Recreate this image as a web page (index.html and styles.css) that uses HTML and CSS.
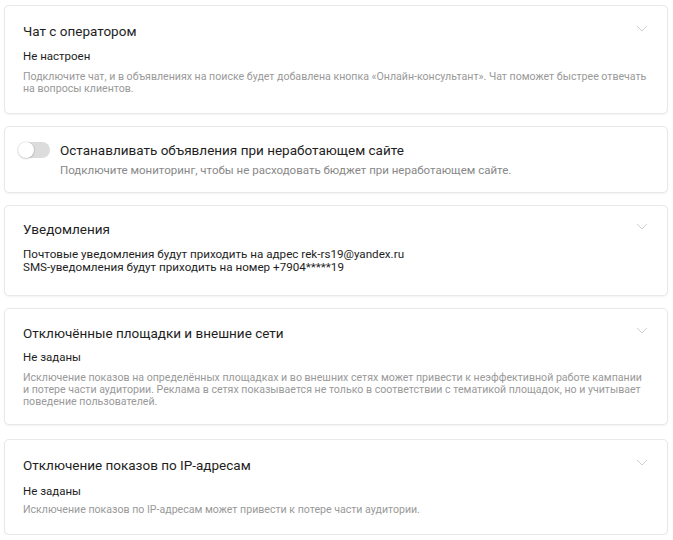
FILE: index.html
```html
<!DOCTYPE html>
<html lang="ru">
<head>
<meta charset="utf-8">
<title>Настройки</title>
<link rel="stylesheet" href="styles.css">
</head>
<body>
<div class="list">
  <section class="card card-chat">
    <div class="head">
      <h2 class="title">Чат с оператором</h2>
      <svg class="chev" width="12" height="7" viewBox="0 0 12 7"><path d="M1 1l5 5 5-5" fill="none" stroke="#cfcfcf" stroke-width="1"/></svg>
    </div>
    <div class="status">Не настроен</div>
    <p class="desc">Подключите чат, и в объявлениях на поиске будет добавлена кнопка «Онлайн-консультант». Чат поможет быстрее отвечать на вопросы клиентов.</p>
  </section>

  <section class="card card-monitor">
    <span class="toggle"><span class="knob"></span></span>
    <div class="monitor-text">
      <h2 class="title">Останавливать объявления при неработающем сайте</h2>
      <p class="sub">Подключите мониторинг, чтобы не расходовать бюджет при неработающем сайте.</p>
    </div>
  </section>

  <section class="card card-notify">
    <div class="head">
      <h2 class="title">Уведомления</h2>
      <svg class="chev" width="12" height="7" viewBox="0 0 12 7"><path d="M1 1l5 5 5-5" fill="none" stroke="#cfcfcf" stroke-width="1"/></svg>
    </div>
    <div class="info">
      <div>Почтовые уведомления будут приходить на адрес rek-rs19@yandex.ru</div>
      <div>SMS-уведомления будут приходить на номер +7904*****19</div>
    </div>
  </section>

  <section class="card card-sites">
    <div class="head">
      <h2 class="title">Отключённые площадки и внешние сети</h2>
      <svg class="chev" width="12" height="7" viewBox="0 0 12 7"><path d="M1 1l5 5 5-5" fill="none" stroke="#cfcfcf" stroke-width="1"/></svg>
    </div>
    <div class="status">Не заданы</div>
    <p class="desc">Исключение показов на определённых площадках и во внешних сетях может привести к неэффективной работе кампании и потере части аудитории. Реклама в сетях показывается не только в соответствии с тематикой площадок, но и учитывает поведение пользователей.</p>
  </section>

  <section class="card card-ip">
    <div class="head">
      <h2 class="title">Отключение показов по IP-адресам</h2>
      <svg class="chev" width="12" height="7" viewBox="0 0 12 7"><path d="M1 1l5 5 5-5" fill="none" stroke="#cfcfcf" stroke-width="1"/></svg>
    </div>
    <div class="status">Не заданы</div>
    <p class="desc">Исключение показов по IP-адресам может привести к потере части аудитории.</p>
  </section>
</div>
</body>
</html>
```

FILE: styles.css
```css
* { box-sizing: border-box; }
html, body { margin: 0; padding: 0; background: #fff; }
body {
  font-family: Roboto, "Noto Sans", Arial, sans-serif;
  color: #111;
  padding: 5px 5px 0 4px;
}
.list {
  display: flex;
  flex-direction: column;
  gap: 12px;
}
.card {
  border: 1px solid #e8e8e8;
  border-radius: 5px;
  box-shadow: 0 1px 2px rgba(0,0,0,0.05);
  padding: 15px 18px 18px 18px;
  background: #fff;
}
.head {
  display: flex;
  justify-content: space-between;
  align-items: flex-start;
}
.title {
  margin: 0;
  font-weight: 400;
  font-size: 13.5px;
  line-height: 18px;
  color: #1e1e1e;
}
.chev { margin-top: 3px; margin-right: 1px; flex: none; }
.status {
  margin-top: 9px;
  font-size: 11.5px;
  line-height: 14px;
  color: #1e1e1e;
}
.desc {
  margin: 8px 0 0;
  font-size: 10.6px;
  line-height: 12px;
  color: #999;
}

/* card 1 */
.card-chat { padding-top: 16px; padding-bottom: 18px; }

/* card 2 */
.card-monitor {
  display: flex;
  align-items: flex-start;
  gap: 10px;
  padding: 14px 18px 15px 13px;
}
.toggle {
  flex: none;
  width: 32px;
  height: 16px;
  margin-top: 1px;
  border-radius: 8px;
  background: #dcdcdc;
  position: relative;
}
.knob {
  position: absolute;
  left: 0;
  top: 0;
  width: 16px;
  height: 16px;
  border-radius: 50%;
  background: #fff;
  box-shadow: 0 0 0 1px rgba(0,0,0,0.06), 0 1px 2px rgba(0,0,0,0.15);
}
.sub {
  margin: 4px 0 0;
  font-size: 11.5px;
  line-height: 14px;
  color: #888;
}

/* card 3 */
.card-notify { padding-top: 14px; padding-bottom: 21px; }
.info {
  margin-top: 10px;
  font-size: 11.65px;
  line-height: 13px;
  color: #1e1e1e;
}

/* card 4 */
.card-sites { padding-top: 15px; padding-bottom: 16px; }
.card-sites .status { margin-top: 8px; }
.card-sites .desc { margin-top: 8px; }

/* card 5 */
.card-ip { margin-top: 2px; padding-top: 16px; padding-bottom: 18px; }
.card-ip .status { margin-top: 10px; }
.card-ip .desc { margin-top: 6px; }
```
